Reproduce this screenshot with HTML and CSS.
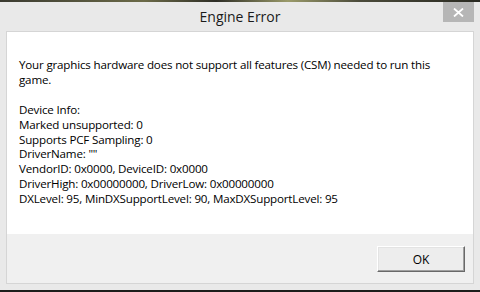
FILE: index.html
```html
<!DOCTYPE html>
<html>
<head>
<meta charset="utf-8">
<link rel="stylesheet" href="styles.css">
</head>
<body>
<div class="desk-top"></div>
<div class="window">
  <div class="titlebar">
    <div class="title">Engine Error</div>
    <div class="close"><svg width="11" height="9" viewBox="0 0 11 9"><path d="M1 0.5 L10 8.5 M10 0.5 L1 8.5" stroke="#fff" stroke-width="1.8"/></svg></div>
  </div>
  <div class="client">
    <div class="message">
      <p>Your graphics hardware does not support all features (CSM) needed to run this game.</p>
      <p>Device Info:<br>Marked unsupported: 0<br>Supports PCF Sampling: 0<br>DriverName: ""<br>VendorID: 0x0000, DeviceID: 0x0000<br>DriverHigh: 0x00000000, DriverLow: 0x00000000<br>DXLevel: 95, MinDXSupportLevel: 90, MaxDXSupportLevel: 95</p>
    </div>
    <div class="footer">
      <button class="ok">OK</button>
    </div>
  </div>
</div>
<div class="desk-bottom"></div>
</body>
</html>
```
FILE: styles.css
```css
html, body {
  margin: 0;
  padding: 0;
  width: 480px;
  height: 292px;
  overflow: hidden;
  background: #1e1e1c;
  font-family: "Open Sans", "Noto Sans", sans-serif;
}
.desk-top {
  height: 2px;
  background: linear-gradient(90deg, #3a3a30 0%, #6b6a48 30%, #2e2e26 45%, #9a9a6a 60%, #4a4a3a 75%, #2a2a22 100%);
}
.window {
  height: 288px;
  background: #e9e9e9;
  display: flex;
  flex-direction: column;
}
.titlebar {
  height: 29px;
  position: relative;
  display: flex;
  justify-content: center;
}
.title {
  font-size: 14px;
  color: #1a1a1a;
  line-height: 16px;
  padding-top: 7px;
}
.close {
  position: absolute;
  left: 443px;
  top: 0;
  width: 31px;
  height: 20px;
  background: #b6b6b6;
  display: flex;
  align-items: center;
  justify-content: center;
}
.client {
  margin: 0 6px;
  height: 251px;
  border: 1px solid #d5d5d5;
  display: flex;
  flex-direction: column;
}
.message {
  background: #fff;
  height: 202px;
  padding: 26px 12px 0 12px;
  box-sizing: border-box;
  font-size: 11.6px;
  letter-spacing: -0.18px;
  line-height: 14.9px;
  color: #000;
}
.message p {
  margin: 0 0 14.9px 0;
}
.footer {
  flex: 1;
  background: #f0f0f0;
  display: flex;
  justify-content: flex-end;
  align-items: flex-start;
  padding: 12px 8px 0 0;
}
.ok {
  width: 88px;
  height: 26px;
  background: #ededed;
  border: 1px solid;
  border-color: #fff #696969 #696969 #fff;
  box-shadow: inset -1px -1px 0 #a0a0a0, inset 1px 1px 0 #e3e3e3;
  font-family: "Open Sans", "Noto Sans", sans-serif;
  font-size: 12px;
  color: #000;
  padding: 0;
}
.desk-bottom {
  height: 2px;
  background: #1c1c1a;
}
```
